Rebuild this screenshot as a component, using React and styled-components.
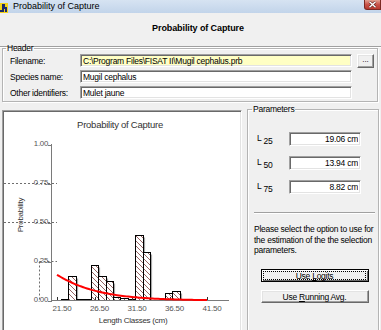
import React from 'react';
import styled, { createGlobalStyle } from 'styled-components';

const Global = createGlobalStyle`
  html, body { margin: 0; padding: 0; background: #f0f0f0; }
  body { font-family: "Liberation Sans", Arial, sans-serif; }
  * { box-sizing: border-box; }
`;

const Window = styled.div`
  width: 381px;
  height: 330px;
  overflow: hidden;
  background: #f0f0f0;
  display: flex;
  flex-direction: column;
  font-family: "Liberation Sans", Arial, sans-serif;
  font-size: 8.5px;
  letter-spacing: -0.25px;
  color: #000;
`;

const TitleBar = styled.div`
  height: 13px;
  flex: none;
  display: flex;
  align-items: center;
  background: linear-gradient(#d6e3f2, #c2d4ea);
`;

const AppIcon = styled.svg`
  width: 8px;
  height: 12px;
  flex: none;
`;

const TitleText = styled.span`
  margin-left: 5px;
  font-size: 9px;
  letter-spacing: 0;
  line-height: 13px;
  color: #000;
`;

const CloseButton = styled.div`
  margin-left: auto;
  align-self: flex-start;
  width: 17px;
  height: 10px;
  display: flex;
  align-items: center;
  justify-content: center;
  background: linear-gradient(#e3a293, #c9544a 50%, #b83a30);
  border: 1px solid #7b2a24;
  border-top: none;
  border-radius: 0 0 0 3px;
`;

const Heading = styled.div`
  height: 34px;
  flex: none;
  display: flex;
  align-items: center;
  justify-content: center;
  padding: 0 0 4px 15px;
  font-size: 9px;
  font-weight: bold;
  letter-spacing: -0.1px;
  border-bottom: 1px solid #a0a0a0;
  box-shadow: 0 1px 0 #ffffff;
`;

const Group = styled.fieldset`
  margin: ${p => p.$margin};
  padding: ${p => p.$padding};
  border: 1px solid #b4b4b4;
  box-shadow: inset 1px 1px 0 #ffffff, 1px 1px 0 #ffffff;
  min-width: 0;
  ${p => p.$grow && 'flex: 1; align-self: stretch; height: 240px;'}
`;

const Legend = styled.legend`
  margin-left: ${p => p.$ml}px;
  padding: 0 1px;
  font-size: 8.5px;
  line-height: 9px;
`;

const FieldRow = styled.div`
  display: flex;
  align-items: center;
  height: 13px;
  margin-bottom: ${p => (p.$last ? 0 : 3)}px;
`;

const FieldLabel = styled.span`
  width: 70px;
  flex: none;
  white-space: nowrap;
`;

const sunken = `
  border: 1px solid;
  border-color: #a0a0a0 #ffffff #ffffff #a0a0a0;
  box-shadow: inset 1px 1px 0 #696969, inset -1px -1px 0 #e3e3e3;
`;

const TextBox = styled.input`
  ${sunken}
  width: ${p => p.$w}px;
  height: ${p => p.$h || 13}px;
  flex: none;
  padding: 0 2px;
  margin: 0;
  background: ${p => p.$bg || '#ffffff'};
  font-family: "Liberation Sans", Arial, sans-serif;
  font-size: 8.5px;
  letter-spacing: -0.25px;
  color: #000;
  text-align: ${p => p.$align || 'left'};
  outline: none;
`;

const raised = `
  border: 1px solid;
  border-color: #ffffff #696969 #696969 #ffffff;
  box-shadow: inset -1px -1px 0 #a0a0a0, inset 1px 1px 0 #e3e3e3;
`;

const BrowseButton = styled.button`
  ${raised}
  width: 17px;
  height: 14px;
  margin-left: 5px;
  padding: 0 0 3px;
  flex: none;
  display: flex;
  align-items: flex-end;
  justify-content: center;
  background: #f0f0f0;
  font-family: "Liberation Sans", Arial, sans-serif;
  font-size: 8px;
  line-height: 8px;
  color: #000;
`;

const Main = styled.div`
  display: flex;
  align-items: flex-start;
  flex: 1;
  min-height: 0;
`;

const ChartPanel = styled.div`
  margin: 8px 0 0 2px;
  width: 240px;
  height: 224px;
  flex: none;
  border: 1px solid;
  border-color: #a0a0a0 #ffffff #ffffff #a0a0a0;
  box-shadow: inset 1px 1px 0 #696969, inset -1px -1px 0 #e3e3e3;
  background: #ffffff;
  padding: 1px;
`;

const ChartSvg = styled.svg`
  display: block;
  width: 236px;
  height: 220px;
`;

const ParamRow = styled.div`
  display: flex;
  align-items: center;
  height: 14px;
  padding-left: 3px;
  margin-bottom: 10px;
`;

const ParamLabel = styled.span`
  width: 32px;
  flex: none;
  white-space: nowrap;
`;

const Sub = styled.span`
  margin-left: 2px;
  vertical-align: -3px;
`;

const Separator = styled.div`
  height: 2px;
  margin-top: 18px;
  border-top: 1px solid #a0a0a0;
  border-bottom: 1px solid #ffffff;
`;

const Note = styled.p`
  margin: 10px 0 0;
  line-height: 10.7px;
  white-space: nowrap;
`;

const ActionButton = styled.button`
  display: flex;
  align-items: stretch;
  width: 108px;
  height: 13px;
  margin: ${p => p.$mt}px 0 0 7px;
  padding: 0;
  background: #f0f0f0;
  font-family: "Liberation Sans", Arial, sans-serif;
  font-size: 8.5px;
  letter-spacing: -0.25px;
  color: #000;
  border: 1px solid;
  border-color: ${p => (p.$default ? '#000000' : '#ffffff #696969 #696969 #ffffff')};
  box-shadow: ${p =>
    p.$default
      ? 'inset 1px 1px 0 #ffffff, inset -1px -1px 0 #696969'
      : 'inset -1px -1px 0 #a0a0a0, inset 1px 1px 0 #e3e3e3'};
`;

const ButtonFace = styled.span`
  flex: 1;
  display: flex;
  align-items: center;
  justify-content: center;
  margin: 1px 2px 1px 1px;
  border: 1px ${p => (p.$focus ? 'dotted #000000' : 'solid transparent')};
  line-height: 8px;
  white-space: nowrap;
`;

/* ---------- chart data ---------- */
const yOf = v => 300.5 - v * 156;
const xOfL = L => 57 + (L - 21.5) * 7.5;
const prob = L => 1 / (1 + Math.exp(0.2146 * (L - 13.94)));

const barValues = [
  0.008, 0.155, 0.012, 0.008, 0.225, 0.16, 0.128, 0.025, 0.016, 0.007,
  0.423, 0.314, 0, 0, 0.045, 0.064, 0.003,
];

const bars = barValues.map((v, i) => {
  const x0 = Math.round(61 + 7.43 * i) + 0.5;
  const x1 = Math.round(61 + 7.43 * (i + 1)) + 0.5;
  return { x: x0, w: x1 - x0, v };
});

const curve = [];
for (let L = 21.5; L <= 41.5001; L += 0.25) {
  curve.push(`${xOfL(L).toFixed(2)},${yOf(prob(L)).toFixed(2)}`);
}

const xTicks = [21.5, 26.5, 31.5, 36.5, 41.5];
const yTicks = [1, 0.75, 0.5, 0.25, 0];

function Chart() {
  const axisColor = '#7a7a7a';
  return (
    <ChartSvg viewBox="4 112 236 220">
      <defs>
        <pattern id="hatch" patternUnits="userSpaceOnUse" width="5" height="5">
          <path d="M-1,-1 L6,6 M-1,4 L1,6 M4,-1 L6,1" stroke="#7d3b3b" strokeWidth="0.8" />
        </pattern>
      </defs>
      <text x="120" y="127.5" textAnchor="middle" fontSize="9.5" fill="#333" fontFamily="Liberation Sans, Arial, sans-serif">
        Probability of Capture
      </text>

      {/* selection markers */}
      <g stroke="#6e6e6e" strokeWidth="1" strokeDasharray="2 2" fill="none">
        <line x1={4} y1={183.5} x2={57} y2={183.5} />
        <line x1={4} y1={222.5} x2={57} y2={222.5} />
        <line x1={39.5} y1={261.5} x2={57} y2={261.5} />
        <line x1={39.5} y1={261.5} x2={39.5} y2={300} />
      </g>

      {/* bars */}
      {bars.map((b, i) => {
        const top = Math.round(yOf(b.v)) + 0.5;
        const h = 300.5 - top;
        if (h <= 0) return null;
        return (
          <g key={i}>
            {h > 3 && <rect x={b.x + b.w} y={top + 2} width={1.6} height={h - 2} fill="#a8a8a8" />}
            <rect x={b.x} y={top} width={b.w} height={h} fill="#ffffff" />
            <rect x={b.x} y={top} width={b.w} height={h} fill="url(#hatch)" stroke="#000" strokeWidth="1" />
          </g>
        );
      })}

      {/* axes */}
      <line x1={51.5} y1={144} x2={51.5} y2={300.5} stroke={axisColor} strokeWidth="1" />
      <line x1={51} y1={300.5} x2={229} y2={300.5} stroke={axisColor} strokeWidth="1" />
      {yTicks.map(v => (
        <g key={v}>
          <line x1={48} y1={Math.round(yOf(v)) + 0.5} x2={52} y2={Math.round(yOf(v)) + 0.5} stroke={axisColor} />
          <text x={48} y={yOf(v) + 1} textAnchor="end" fontSize="7.8" fill="#555" fontFamily="Liberation Sans, Arial, sans-serif">
            {v.toFixed(2)}
          </text>
        </g>
      ))}
      {xTicks.map(L => (
        <g key={L}>
          <line x1={Math.round(xOfL(L)) + 0.5} y1={297} x2={Math.round(xOfL(L)) + 0.5} y2={300} stroke="#333" />
          <text x={xOfL(L) + 5} y={311} textAnchor="middle" fontSize="8" fill="#555" fontFamily="Liberation Sans, Arial, sans-serif">
            {L.toFixed(2)}
          </text>
        </g>
      ))}

      {/* fitted curve */}
      <polyline points={curve.join(' ')} fill="none" stroke="#ff0000" strokeWidth="2" strokeLinejoin="round" />

      <text x="133" y="323" textAnchor="middle" fontSize="8" fill="#333" fontFamily="Liberation Sans, Arial, sans-serif">
        Length Classes (cm)
      </text>
      <text
        x="0"
        y="0"
        transform="translate(22.5 215) rotate(-90)"
        textAnchor="middle"
        fontSize="8"
        fill="#333"
        fontFamily="Liberation Sans, Arial, sans-serif"
      >
        Probability
      </text>
    </ChartSvg>
  );
}

export default function App() {
  return (
    <Window>
      <Global />
      <TitleBar>
        <AppIcon viewBox="0 0 8 12">
          <rect x="0" y="2" width="8" height="10" fill="#f2d21a" />
          <path d="M2 3 h3 v3 h2 v5 h-2 v-3 h-1 v3 h-2 z" fill="#1b2a6b" />
          <rect x="0" y="9" width="2" height="2" fill="#1b2a6b" />
        </AppIcon>
        <TitleText>Probability of Capture</TitleText>
        <CloseButton>
          <svg width="9" height="7" viewBox="0 0 9 7">
            <path d="M1.5 0.8 L7.5 6.2 M7.5 0.8 L1.5 6.2" stroke="#5a1c17" strokeWidth="2.6" />
            <path d="M1.5 0.8 L7.5 6.2 M7.5 0.8 L1.5 6.2" stroke="#ffffff" strokeWidth="1.5" />
          </svg>
        </CloseButton>
      </TitleBar>

      <Heading>Probability of Capture</Heading>

      <Group $margin="-3px 3px 0 2px" $padding="1px 3px 2px 7px">
        <Legend $ml={-4}>Header</Legend>
        <FieldRow>
          <FieldLabel>Filename:</FieldLabel>
          <TextBox readOnly $w={272} $bg="#ffffc4" value="C:\Program Files\FISAT II\Mugil cephalus.prb" />
          <BrowseButton>...</BrowseButton>
        </FieldRow>
        <FieldRow>
          <FieldLabel>Species name:</FieldLabel>
          <TextBox readOnly $w={272} value="Mugil cephalus" />
        </FieldRow>
        <FieldRow $last>
          <FieldLabel>Other identifiers:</FieldLabel>
          <TextBox readOnly $w={272} value="Mulet jaune" />
        </FieldRow>
      </Group>

      <Main>
        <ChartPanel>
          <Chart />
        </ChartPanel>
        <Group $grow $margin="3px 2px 0 5px" $padding="18px 3px 0 6px">
          <Legend $ml={-2}>Parameters</Legend>
          <ParamRow>
            <ParamLabel>L<Sub>25</Sub></ParamLabel>
            <TextBox readOnly $w={72} $h={14} $align="right" value="19.06 cm" />
          </ParamRow>
          <ParamRow>
            <ParamLabel>L<Sub>50</Sub></ParamLabel>
            <TextBox readOnly $w={72} $h={14} $align="right" value="13.94 cm" />
          </ParamRow>
          <ParamRow>
            <ParamLabel>L<Sub>75</Sub></ParamLabel>
            <TextBox readOnly $w={72} $h={14} $align="right" value="8.82 cm" />
          </ParamRow>
          <Separator />
          <Note>
            Please select the option to use for
            <br />
            the estimation of the the selection
            <br />
            parameters.
          </Note>
          <ActionButton $default $mt={13}>
            <ButtonFace $focus>
              Use&nbsp;<u>L</u>ogits
            </ButtonFace>
          </ActionButton>
          <ActionButton $mt={8}>
            <ButtonFace>
              Use&nbsp;<u>R</u>unning Avg.
            </ButtonFace>
          </ActionButton>
        </Group>
      </Main>
    </Window>
  );
}
